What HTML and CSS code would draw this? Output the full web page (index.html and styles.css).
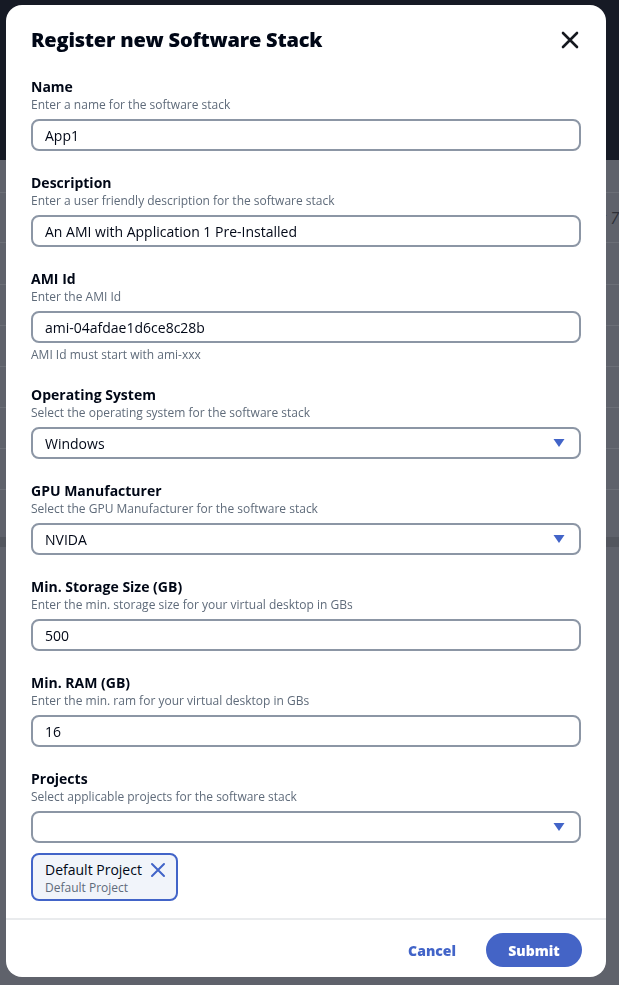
FILE: index.html
```html
<!DOCTYPE html>
<html lang="en">
<head>
<meta charset="utf-8">
<title>Register new Software Stack</title>
<link rel="stylesheet" href="styles.css">
</head>
<body>
<div class="page">
  <div class="topbar"></div>
  <div class="table">
    <div class="row r1"></div>
    <div class="row r2"><span class="ghost">k 7</span></div>
    <div class="row r3"></div>
    <div class="row r4"></div>
    <div class="row r5"></div>
    <div class="row r6"></div>
    <div class="row r7"></div>
    <div class="row r8"></div>
    <div class="band"></div>
  </div>
</div>

<div class="modal" role="dialog">
  <div class="modal-header">
    <h2 class="modal-title">Register new Software Stack</h2>
    <button class="close" aria-label="Close">
      <svg width="20" height="20" viewBox="0 0 20 20"><path d="M3 3 L17 17 M17 3 L3 17" stroke="#16191f" stroke-width="2.6" stroke-linecap="round" fill="none"/></svg>
    </button>
  </div>
  <div class="modal-body">
    <div class="field">
      <div class="label">Name</div>
      <div class="desc">Enter a name for the software stack</div>
      <div class="input">App1</div>
    </div>
    <div class="field">
      <div class="label">Description</div>
      <div class="desc">Enter a user friendly description for the software stack</div>
      <div class="input">An AMI with Application 1 Pre-Installed</div>
    </div>
    <div class="field">
      <div class="label">AMI Id</div>
      <div class="desc">Enter the AMI Id</div>
      <div class="input">ami-04afdae1d6ce8c28b</div>
      <div class="constraint">AMI Id must start with ami-xxx</div>
    </div>
    <div class="field">
      <div class="label">Operating System</div>
      <div class="desc">Select the operating system for the software stack</div>
      <div class="input select"><span>Windows</span><svg class="caret" width="12" height="10" viewBox="0 0 12 10"><path d="M0.5 1 L11.5 1 L6 9 Z" fill="#4264c8"/></svg></div>
    </div>
    <div class="field">
      <div class="label">GPU Manufacturer</div>
      <div class="desc">Select the GPU Manufacturer for the software stack</div>
      <div class="input select"><span>NVIDA</span><svg class="caret" width="12" height="10" viewBox="0 0 12 10"><path d="M0.5 1 L11.5 1 L6 9 Z" fill="#4264c8"/></svg></div>
    </div>
    <div class="field">
      <div class="label">Min. Storage Size (GB)</div>
      <div class="desc">Enter the min. storage size for your virtual desktop in GBs</div>
      <div class="input">500</div>
    </div>
    <div class="field">
      <div class="label">Min. RAM (GB)</div>
      <div class="desc">Enter the min. ram for your virtual desktop in GBs</div>
      <div class="input">16</div>
    </div>
    <div class="field last">
      <div class="label">Projects</div>
      <div class="desc">Select applicable projects for the software stack</div>
      <div class="input select"><span></span><svg class="caret" width="12" height="10" viewBox="0 0 12 10"><path d="M0.5 1 L11.5 1 L6 9 Z" fill="#4264c8"/></svg></div>
      <div class="tokens">
        <div class="token">
          <div class="token-text">
            <div class="token-title">Default Project</div>
            <div class="token-sub">Default Project</div>
          </div>
          <svg class="token-x" width="16" height="16" viewBox="0 0 16 16"><path d="M2 2 L14 14 M14 2 L2 14" stroke="#4264c8" stroke-width="2" stroke-linecap="round" fill="none"/></svg>
        </div>
      </div>
    </div>
  </div>
  <div class="modal-footer">
    <button class="btn-link">Cancel</button>
    <button class="btn-primary">Submit</button>
  </div>
</div>
</body>
</html>
```
FILE: styles.css
```css
* { box-sizing: border-box; }
html, body { margin: 0; padding: 0; }
body {
  width: 619px;
  height: 985px;
  overflow: hidden;
  background: #5f626b;
  font-family: "Open Sans", "Noto Sans", sans-serif;
  color: #000716;
}
.page { width: 100%; height: 100%; }
.topbar { height: 160px; background: #161a25; }
.table { display: flex; flex-direction: column; }
.row {
  height: 41px;
  border-bottom: 1px solid #6c6f77;
  position: relative;
}
.r1 { height: 33px; }
.r2 { height: 50px; }
.r3 { height: 42px; }
.ghost {
  position: absolute;
  right: 0;
  top: 14px;
  font-size: 16px;
  color: #2e3038;
  font-style: italic;
}
.band { margin-top: 47px; height: 10px; background: #53565e; }

.modal {
  position: fixed;
  left: 6px;
  top: 5px;
  width: 600px;
  height: 972px;
  background: #ffffff;
  border-radius: 16px;
  display: flex;
  flex-direction: column;
  overflow: hidden;
}
.modal-header {
  display: flex;
  align-items: center;
  justify-content: space-between;
  padding: 21px 25px 0 25px;
  height: 49px;
}
.modal-title {
  margin: 0;
  font-size: 20px;
  font-weight: 800;
  line-height: 28px;
  letter-spacing: -0.2px;
  color: #000716;
}
.close {
  border: 0;
  background: none;
  padding: 0;
  margin-right: 1px;
  width: 20px;
  height: 20px;
  display: flex;
}
.modal-body {
  padding: 24px 25px 0 25px;
  flex: 1;
  display: flex;
  flex-direction: column;
}
.field { margin-bottom: 23px; }
.field.last { margin-bottom: 0; }
.label {
  font-size: 14px;
  font-weight: 700;
  line-height: 18px;
  color: #000716;
}
.desc {
  font-size: 12px;
  line-height: 18px;
  color: #5f6b7a;
  margin-bottom: 5px;
}
.input {
  height: 32px;
  border: 2px solid #8c96a5;
  border-radius: 8px;
  padding: 0 12px;
  display: flex;
  align-items: center;
  font-size: 14px;
  color: #000716;
  width: 550px;
}
.select { justify-content: space-between; padding-right: 14px; }
.caret { display: block; }
.constraint {
  font-size: 12px;
  line-height: 16px;
  color: #5f6b7a;
  margin-top: 4px;
}
.tokens { margin-top: 10px; display: flex; }
.token {
  display: flex;
  align-items: flex-start;
  gap: 8px;
  height: 48px;
  padding: 5px 10px 0 12px;
  border: 2px solid #4264c8;
  border-radius: 8px;
  background: #f1f4fa;
}
.token-title { font-size: 14px; line-height: 20px; color: #000716; }
.token-sub { font-size: 12px; line-height: 16px; color: #5f6b7a; }
.token-x { margin-top: 2px; }
.modal-footer {
  border-top: 2px solid #e9ebed;
  height: 59px;
  display: flex;
  align-items: center;
  justify-content: flex-end;
  padding: 14px 24px 11px 0;
  gap: 30px;
}
.btn-link {
  border: 0;
  background: none;
  font-family: inherit;
  font-size: 14px;
  font-weight: 800;
  color: #4264c8;
  padding: 0;
}
.btn-primary {
  border: 0;
  background: #4464c6;
  color: #ffffff;
  font-family: inherit;
  font-size: 14px;
  font-weight: 800;
  height: 34px;
  width: 96px;
  border-radius: 17px;
}
```
